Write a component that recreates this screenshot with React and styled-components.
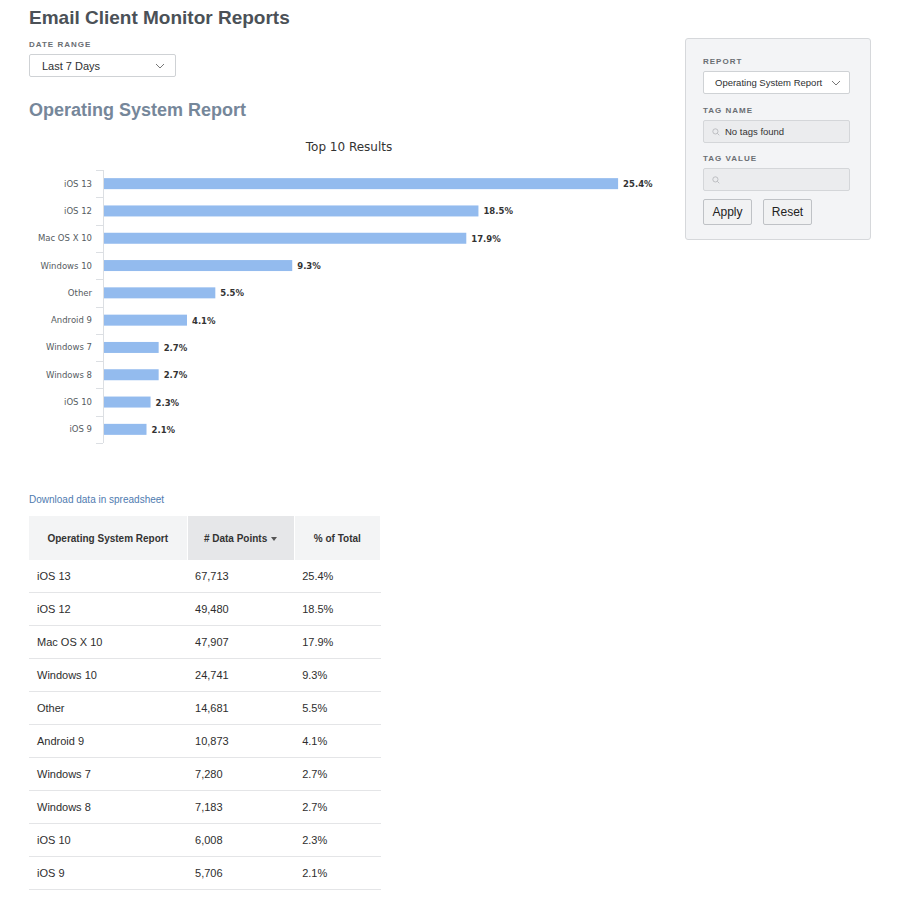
import React from 'react';
import styled, { createGlobalStyle } from 'styled-components';

const GlobalStyle = createGlobalStyle`
  body {
    margin: 0;
    background: #ffffff;
    font-family: "Liberation Sans", Arial, sans-serif;
    color: #333333;
  }
`;

const Page = styled.div`
  display: flex;
  align-items: flex-start;
  gap: 16px;
  padding: 6px 29px 20px;
`;

const Main = styled.div`
  width: 640px;
`;

const Title = styled.h1`
  margin: 0;
  font-size: 19px;
  line-height: 24px;
  font-weight: 700;
  color: #4b5157;
`;

const FieldLabel = styled.div`
  font-size: 8px;
  font-weight: 700;
  letter-spacing: 1px;
  color: #6a6e73;
  line-height: 10px;
  margin: ${(p) => p.$top || 0}px 0 4px;
`;

const Select = styled.div`
  display: flex;
  align-items: center;
  justify-content: space-between;
  box-sizing: border-box;
  width: 147px;
  height: 23px;
  padding: 0 ${(p) => (p.$compact ? 8 : 10)}px 0 ${(p) => (p.$compact ? 11 : 12)}px;
  background: #ffffff;
  border: 1px solid #cfd2d5;
  border-radius: 2px;
  font-size: ${(p) => p.$size || 11}px;
  color: #2d2f31;
  white-space: nowrap;
`;

const SectionTitle = styled.h2`
  margin: 22px 0 0;
  font-size: 18px;
  line-height: 22px;
  font-weight: 700;
  color: #76879a;
`;

const ChartWrap = styled.div`
  margin-top: 14px;
`;

const DownloadLink = styled.a`
  display: block;
  margin-top: 39px;
  font-size: 10px;
  color: #4f7bb0;
  text-decoration: none;
`;

const Table = styled.table`
  margin-top: 11px;
  width: 352px;
  border-collapse: collapse;
  font-size: 11px;
`;

const Th = styled.th`
  height: 44px;
  padding: 0;
  font-size: 10px;
  font-weight: 700;
  color: #333333;
  text-align: center;
  background: ${(p) => (p.$active ? '#e6e7e9' : '#f3f4f5')};
  border-right: 1px solid #ffffff;
  width: ${(p) => p.$w}px;
`;

const Td = styled.td`
  height: 32px;
  padding: 0 0 0 8px;
  border-bottom: 1px solid #e4e5e7;
  color: #2e2e2e;
`;

const Caret = styled.span`
  display: inline-block;
  margin-left: 4px;
  vertical-align: middle;
  border-left: 3.5px solid transparent;
  border-right: 3.5px solid transparent;
  border-top: 4px solid #555;
`;

const Panel = styled.div`
  box-sizing: border-box;
  width: 186px;
  margin-top: 32px;
  padding: 18px 16px 14px 17px;
  background: #f3f4f6;
  border: 1px solid #d6d8db;
  border-radius: 3px;
`;

const SearchInput = styled.div`
  display: flex;
  align-items: center;
  gap: 5px;
  box-sizing: border-box;
  width: 147px;
  height: 23px;
  padding: 0 8px;
  background: #ebecee;
  border: 1px solid #d4d6d9;
  border-radius: 2px;
  font-size: 9.5px;
  color: #333;
`;

const ButtonRow = styled.div`
  display: flex;
  gap: 11px;
  margin-top: 8px;
`;

const Button = styled.button`
  box-sizing: border-box;
  width: ${(p) => p.$w}px;
  height: 26px;
  padding: 0;
  background: #f1f2f3;
  border: 1px solid #bfc2c6;
  border-radius: 2px;
  font-family: "Liberation Sans", Arial, sans-serif;
  font-size: 12px;
  color: #222;
`;

const Chevron = () => (
  <svg width="10" height="6" viewBox="0 0 10 6">
    <path d="M1 1l4 4 4-4" fill="none" stroke="#777" strokeWidth="1" />
  </svg>
);

const SearchIcon = () => (
  <svg width="8" height="8" viewBox="0 0 8 8">
    <circle cx="3.4" cy="3.4" r="2.6" fill="none" stroke="#b8babd" strokeWidth="0.9" />
    <path d="M5.3 5.3l2 2" stroke="#b8babd" strokeWidth="0.9" />
  </svg>
);

const data = [
  ['iOS 13', '67,713', 25.4],
  ['iOS 12', '49,480', 18.5],
  ['Mac OS X 10', '47,907', 17.9],
  ['Windows 10', '24,741', 9.3],
  ['Other', '14,681', 5.5],
  ['Android 9', '10,873', 4.1],
  ['Windows 7', '7,280', 2.7],
  ['Windows 8', '7,183', 2.7],
  ['iOS 10', '6,008', 2.3],
  ['iOS 9', '5,706', 2.1],
];

const ROW = 27.3;
const TOP = 35;
const AXIS_X = 74;
const SCALE = 20.24;

const BarChart = () => (
  <svg width="640" height="320" viewBox="0 0 640 320" style={{ display: 'block' }}>
    <text x="320" y="16" textAnchor="middle" fontFamily="DejaVu Sans, Verdana, sans-serif" fontSize="12" fill="#333">
      Top 10 Results
    </text>
    <line x1={AXIS_X + 0.5} y1={TOP} x2={AXIS_X + 0.5} y2={TOP + ROW * 10} stroke="#dcdfe3" />
    {Array.from({ length: 11 }).map((_, i) => (
      <line
        key={`t-${i}`}
        x1={AXIS_X - 7}
        x2={AXIS_X}
        y1={Math.round(TOP + i * ROW) + 0.5}
        y2={Math.round(TOP + i * ROW) + 0.5}
        stroke="#dcdfe3"
      />
    ))}
    {data.map(([name, , pct], i) => {
      const cy = TOP + i * ROW + ROW / 2;
      const w = pct * SCALE;
      return (
        <g key={name} fontFamily="DejaVu Sans, Verdana, sans-serif" fontSize="8.5">
          <text x={AXIS_X - 11} y={cy + 3} textAnchor="end" fill="#555b61">{name}</text>
          <rect x={AXIS_X + 1} y={cy - 5.5} width={w} height="11" fill="#93bbee" />
          <text x={AXIS_X + 1 + w + 5} y={cy + 3.5} fill="#333" fontWeight="700">{pct}%</text>
        </g>
      );
    })}
  </svg>
);

const App = () => (
  <>
    <GlobalStyle />
    <Page>
      <Main>
        <Title>Email Client Monitor Reports</Title>
        <FieldLabel $top={10}>DATE RANGE</FieldLabel>
        <Select>
          <span>Last 7 Days</span>
          <Chevron />
        </Select>
        <SectionTitle>Operating System Report</SectionTitle>
        <ChartWrap>
          <BarChart />
        </ChartWrap>
        <DownloadLink href="#">Download data in spreadsheet</DownloadLink>
        <Table>
          <thead>
            <tr>
              <Th $w={159}>Operating System Report</Th>
              <Th $w={107} $active>
                # Data Points<Caret />
              </Th>
              <Th $w={86}>% of Total</Th>
            </tr>
          </thead>
          <tbody>
            {data.map(([name, count, pct]) => (
              <tr key={name}>
                <Td>{name}</Td>
                <Td>{count}</Td>
                <Td>{pct}%</Td>
              </tr>
            ))}
          </tbody>
        </Table>
      </Main>
      <Panel>
        <FieldLabel>REPORT</FieldLabel>
        <Select $size={9.5} $compact>
          <span>Operating System Report</span>
          <Chevron />
        </Select>
        <FieldLabel $top={12}>TAG NAME</FieldLabel>
        <SearchInput>
          <SearchIcon />
          <span>No tags found</span>
        </SearchInput>
        <FieldLabel $top={11}>TAG VALUE</FieldLabel>
        <SearchInput>
          <SearchIcon />
        </SearchInput>
        <ButtonRow>
          <Button $w={49}>Apply</Button>
          <Button $w={49}>Reset</Button>
        </ButtonRow>
      </Panel>
    </Page>
  </>
);

export default App;
